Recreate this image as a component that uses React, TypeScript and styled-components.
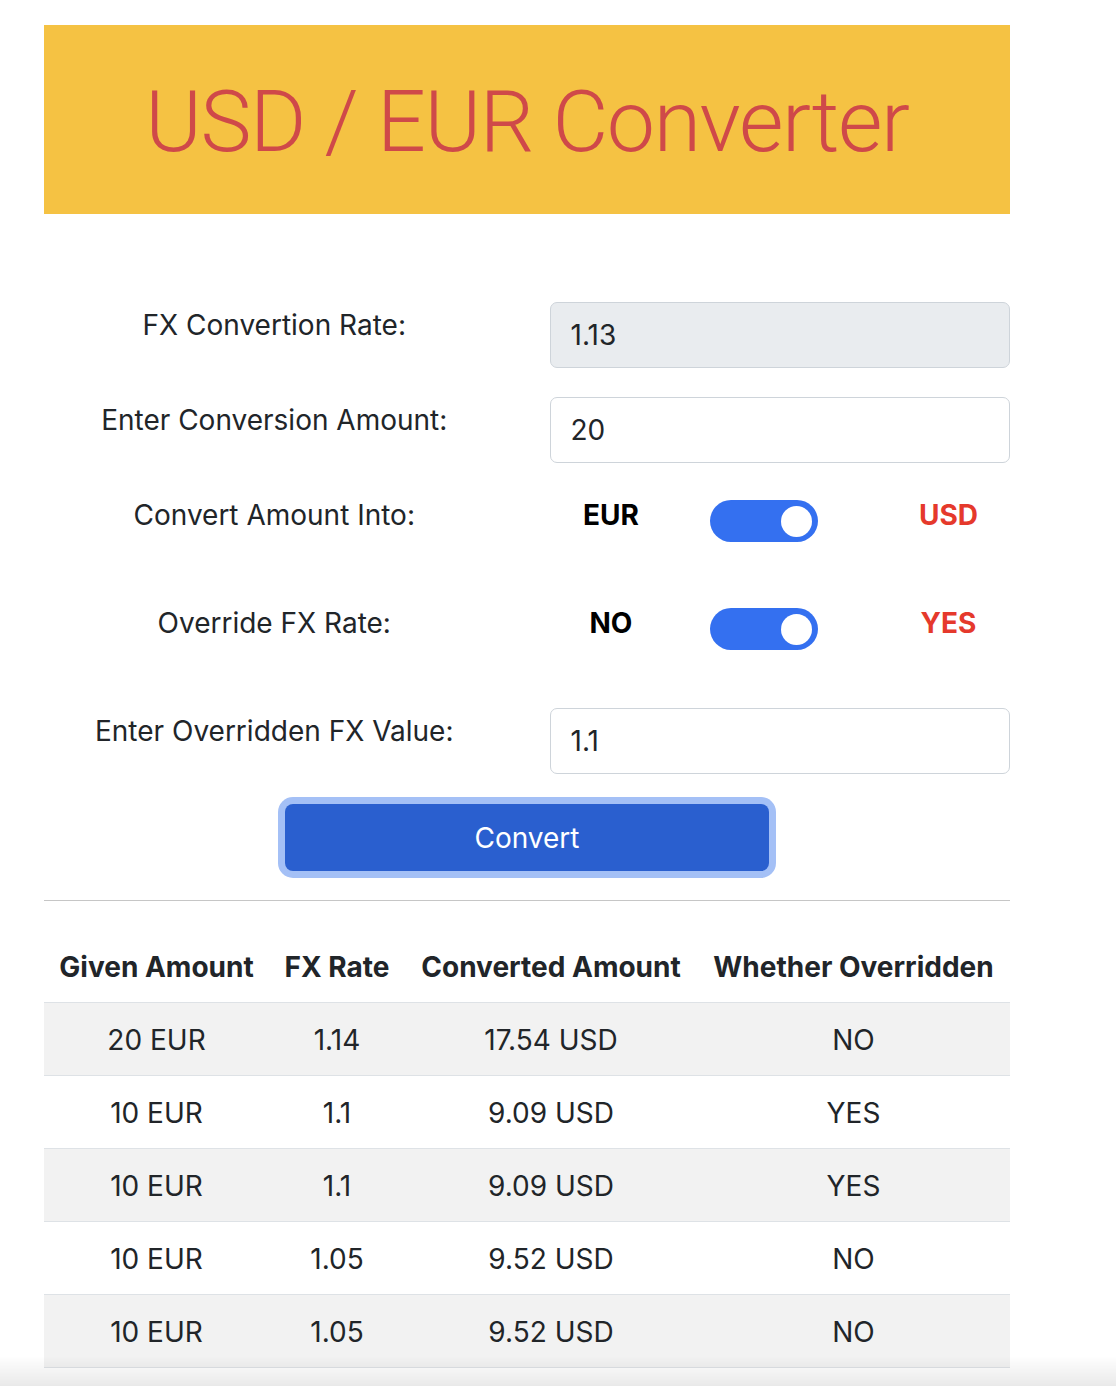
import React from "react";
import styled, { createGlobalStyle } from "styled-components";

const GlobalStyle = createGlobalStyle`
  html, body { margin: 0; padding: 0; background: #ffffff; }
  body {
    font-family: Inter, Roboto, "Liberation Sans", Arial, sans-serif;
    color: #212529;
    font-size: 28px;
    line-height: 1.5;
  }
  * { box-sizing: border-box; }
`;

const Page = styled.div`
  width: 966px;
  margin: 25px 0 0 44px;
  display: flex;
  flex-direction: column;
`;

const Banner = styled.header`
  height: 189px;
  background: #f5c243;
  display: flex;
  align-items: center;
  justify-content: center;
`;

const Title = styled.h1`
  margin: 4px 0 0 0;
  font-family: Roboto, "Liberation Sans", sans-serif;
  font-weight: 300;
  font-size: 86px;
  line-height: 1.2;
  color: #cf4949;
  letter-spacing: -1.4px;
`;

const Form = styled.div`
  display: flex;
  flex-direction: column;
  margin-top: 88px;
`;

const Row = styled.div<{ $gapBelow: number; $height: number }>`
  display: grid;
  grid-template-columns: 460.5px 460.5px;
  column-gap: 45px;
  height: ${(p) => p.$height}px;
  margin-bottom: ${(p) => p.$gapBelow}px;
`;

const Label = styled.label`
  text-align: center;
  padding-top: 3px;
  font-size: 28px;
  line-height: 40px;
  color: #212529;
`;

const Input = styled.input<{ $disabled?: boolean }>`
  width: 100%;
  height: 66px;
  border: 1px solid #ced4da;
  border-radius: 7px;
  padding: 0 20px;
  font-family: Inter, Roboto, "Liberation Sans", sans-serif;
  font-size: 28px;
  color: #212529;
  background: ${(p) => (p.$disabled ? "#e9ecef" : "#ffffff")};
  outline: none;
`;

const SwitchGroup = styled.div`
  display: grid;
  grid-template-columns: 123px 1fr 123px;
  align-items: start;
`;

const Option = styled.span<{ $active?: boolean }>`
  text-align: center;
  font-weight: 700;
  font-size: 28px;
  line-height: 40px;
  padding-top: 3px;
  color: ${(p) => (p.$active ? "#e5392c" : "#000000")};
`;

const SwitchCell = styled.div`
  padding: 8px 0 0 37.5px;
`;

const Track = styled.div`
  width: 108px;
  height: 42px;
  border-radius: 21px;
  background: #3470f0;
  position: relative;
`;

const Knob = styled.span`
  position: absolute;
  right: 6px;
  top: 5.5px;
  width: 31px;
  height: 31px;
  border-radius: 50%;
  background: #ffffff;
`;

const ButtonWrap = styled.div`
  display: flex;
  justify-content: center;
  margin-top: 30px;
`;

const ConvertButton = styled.button`
  width: 484px;
  height: 67px;
  border: none;
  border-radius: 8px;
  background: #2a5fcf;
  color: #ffffff;
  font-family: Inter, Roboto, "Liberation Sans", sans-serif;
  font-size: 28px;
  box-shadow: 0 0 0 7px #a4c0f6;
  cursor: pointer;
`;

const Divider = styled.hr`
  margin: 29px 0 0 0;
  border: none;
  border-top: 1.5px solid #c6c6c6;
  height: 0;
`;

const Table = styled.table`
  margin-top: 20px;
  width: 966px;
  border-collapse: collapse;
  table-layout: fixed;
`;

const HeadCell = styled.th`
  height: 81px;
  font-weight: 700;
  font-size: 28px;
  line-height: 40px;
  text-align: center;
  vertical-align: middle;
  padding: 26px 0 14px;
  color: #212529;
  white-space: nowrap;
  border-bottom: 1.5px solid #dee2e6;
`;

const BodyRow = styled.tr<{ $striped: boolean }>`
  background: ${(p) => (p.$striped ? "#f2f2f2" : "#ffffff")};
`;

const Cell = styled.td`
  height: 73px;
  font-size: 28px;
  line-height: 40px;
  text-align: center;
  vertical-align: middle;
  padding: 2px 0 0;
  color: #212529;
  border-bottom: 1.5px solid #dee2e6;
`;

const BottomShade = styled.div`
  position: fixed;
  left: 0;
  right: 0;
  bottom: 0;
  height: 30px;
  pointer-events: none;
  background: linear-gradient(to bottom, rgba(0, 0, 0, 0), rgba(0, 0, 0, 0.085));
`;

const rows = [
  ["20 EUR", "1.14", "17.54 USD", "NO"],
  ["10 EUR", "1.1", "9.09 USD", "YES"],
  ["10 EUR", "1.1", "9.09 USD", "YES"],
  ["10 EUR", "1.05", "9.52 USD", "NO"],
  ["10 EUR", "1.05", "9.52 USD", "NO"],
];

const Switch = ({ left, right }: { left: string; right: string }) => (
  <SwitchGroup>
    <Option>{left}</Option>
    <SwitchCell>
      <Track>
        <Knob />
      </Track>
    </SwitchCell>
    <Option $active>{right}</Option>
  </SwitchGroup>
);

export default function App() {
  return (
    <>
      <GlobalStyle />
      <Page>
        <Banner>
          <Title>USD / EUR Converter</Title>
        </Banner>
        <Form>
          <Row $height={65} $gapBelow={30}>
            <Label>FX Convertion Rate:</Label>
            <Input $disabled disabled defaultValue="1.13" />
          </Row>
          <Row $height={66} $gapBelow={29}>
            <Label>Enter Conversion Amount:</Label>
            <Input defaultValue="20" />
          </Row>
          <Row $height={50} $gapBelow={58}>
            <Label>Convert Amount Into:</Label>
            <Switch left="EUR" right="USD" />
          </Row>
          <Row $height={50} $gapBelow={58}>
            <Label>Override FX Rate:</Label>
            <Switch left="NO" right="YES" />
          </Row>
          <Row $height={66} $gapBelow={0}>
            <Label>Enter Overridden FX Value:</Label>
            <Input defaultValue="1.1" />
          </Row>
          <ButtonWrap>
            <ConvertButton>Convert</ConvertButton>
          </ButtonWrap>
        </Form>
        <Divider />
        <Table>
          <colgroup>
            <col style={{ width: 225 }} />
            <col style={{ width: 136 }} />
            <col style={{ width: 292 }} />
            <col style={{ width: 313 }} />
          </colgroup>
          <thead>
            <tr>
              <HeadCell>Given Amount</HeadCell>
              <HeadCell>FX Rate</HeadCell>
              <HeadCell>Converted Amount</HeadCell>
              <HeadCell>Whether Overridden</HeadCell>
            </tr>
          </thead>
          <tbody>
            {rows.map((r, i) => (
              <BodyRow key={i} $striped={i % 2 === 0}>
                {r.map((c, j) => (
                  <Cell key={j}>{c}</Cell>
                ))}
              </BodyRow>
            ))}
          </tbody>
        </Table>
      </Page>
      <BottomShade />
    </>
  );
}
